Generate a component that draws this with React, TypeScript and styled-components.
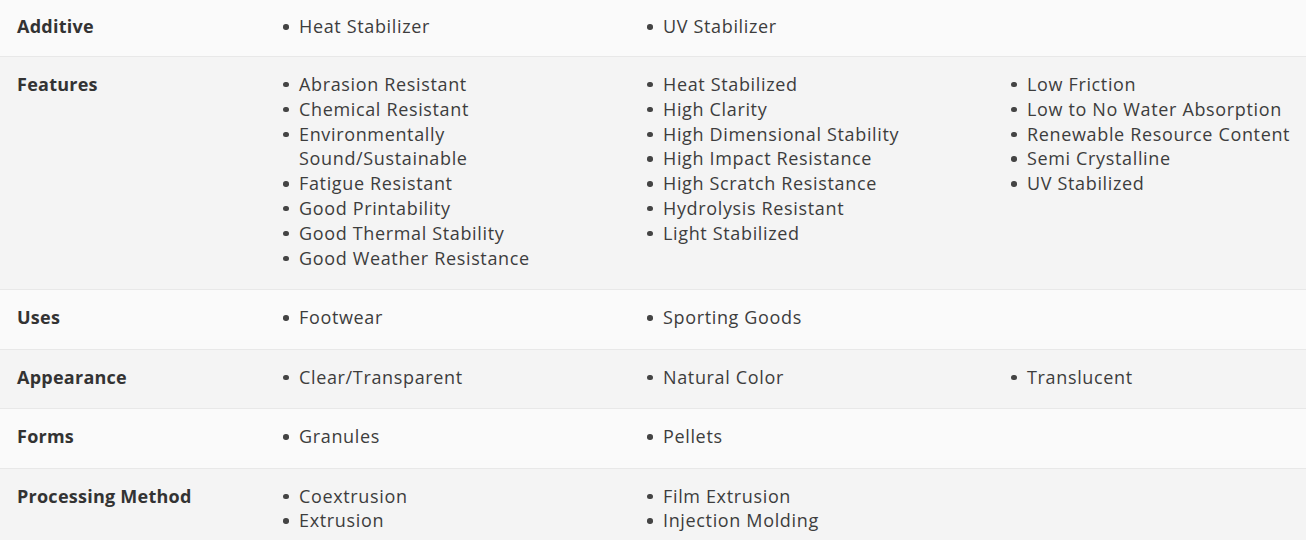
import styled, { createGlobalStyle } from "styled-components";

const GlobalStyle = createGlobalStyle`
  body {
    margin: 0;
    background: #fafafa;
    font-family: "Open Sans", "Liberation Sans", sans-serif;
  }
`;

interface IRow {
  label: string;
  columns: string[][];
}

const rows: IRow[] = [
  { label: "Additive", columns: [["Heat Stabilizer"], ["UV Stabilizer"]] },
  {
    label: "Features",
    columns: [
      [
        "Abrasion Resistant",
        "Chemical Resistant",
        "Environmentally Sound/Sustainable",
        "Fatigue Resistant",
        "Good Printability",
        "Good Thermal Stability",
        "Good Weather Resistance",
      ],
      [
        "Heat Stabilized",
        "High Clarity",
        "High Dimensional Stability",
        "High Impact Resistance",
        "High Scratch Resistance",
        "Hydrolysis Resistant",
        "Light Stabilized",
      ],
      ["Low Friction", "Low to No Water Absorption", "Renewable Resource Content", "Semi Crystalline", "UV Stabilized"],
    ],
  },
  { label: "Uses", columns: [["Footwear"], ["Sporting Goods"]] },
  { label: "Appearance", columns: [["Clear/Transparent"], ["Natural Color"], ["Translucent"]] },
  { label: "Forms", columns: [["Granules"], ["Pellets"]] },
  { label: "Processing Method", columns: [["Coextrusion", "Extrusion"], ["Film Extrusion", "Injection Molding"]] },
];

const App = () => {
  return (
    <>
      <GlobalStyle />
      <Table>
        {rows.map((row, i) => (
          <Row key={row.label} $shaded={i % 2 === 1}>
            <Label>{row.label}</Label>
            <Values>
              {row.columns.map((col, j) => (
                <List key={j}>
                  {col.map((item) => (
                    <Item key={item}>{item}</Item>
                  ))}
                </List>
              ))}
            </Values>
          </Row>
        ))}
      </Table>
    </>
  );
};

export default App;

const Table = styled.div`
  display: flex;
  flex-direction: column;
  width: 1306px;
`;

const Row = styled.div<{ $shaded: boolean }>`
  display: grid;
  grid-template-columns: 250px 1fr;
  padding: 15px 0 18.7px 17px;
  background: ${({ $shaded }) => ($shaded ? "#f4f4f4" : "#fafafa")};
  border-bottom: 1px solid #e8e8e8;

  &:first-child {
    padding-top: 14px;
    padding-bottom: 17.2px;
  }
`;

const Label = styled.div`
  font-size: 18px;
  font-weight: 700;
  letter-spacing: 0.25px;
  line-height: 24.8px;
  color: #333;
`;

const Values = styled.div`
  display: grid;
  grid-template-columns: repeat(3, 300px);
  column-gap: 64px;
`;

const List = styled.ul`
  margin: 0;
  padding: 0;
  list-style: none;
`;

const Item = styled.li`
  position: relative;
  padding-left: 32px;
  font-size: 18px;
  letter-spacing: 0.65px;
  line-height: 24.8px;
  color: #3d3d3d;

  &::before {
    content: "";
    position: absolute;
    left: 16px;
    top: 10px;
    width: 5.5px;
    height: 5.5px;
    border-radius: 50%;
    background: #444;
  }
`;
